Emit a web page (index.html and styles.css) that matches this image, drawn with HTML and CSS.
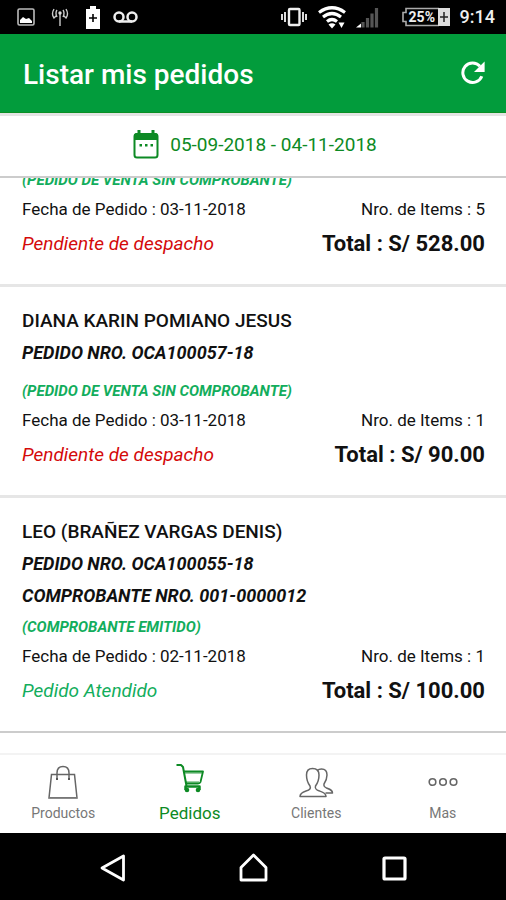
FILE: index.html
```html
<!DOCTYPE html>
<html lang="es">
<head>
<meta charset="utf-8">
<meta name="viewport" content="width=device-width, initial-scale=1">
<title>Listar mis pedidos</title>
<link rel="stylesheet" href="styles.css">
</head>
<body>
<div class="status">
  <div class="status-left">
    <svg width="18" height="18" viewBox="0 0 18 18" aria-hidden="true"><rect x="1" y="1" width="16" height="16" rx="1.5" fill="none" stroke="#bbb" stroke-width="1.6"/><path d="M3 15v-3l3-3 3 2 3-1 3 3v2z" fill="#fff"/></svg>
    <svg width="18" height="18" viewBox="0 0 18 18" aria-hidden="true"><g fill="none" stroke="#ccc" stroke-width="1.4"><path d="M9 5v13"/><path d="M6 2q-2 3 0 7M3 1q-3 5 0 9l2-2M12 2q2 3 0 7M15 1q3 5 0 9l-2-2"/></g><circle cx="9" cy="5" r="1.7" fill="#ddd"/></svg>
    <svg width="16" height="23" viewBox="0 0 16 23" aria-hidden="true"><path d="M1 3h4V0h6v3h4v20H1z" fill="#fff"/><path d="M8 8v8M4 12h8" stroke="#000" stroke-width="1.6"/></svg>
    <svg width="25" height="14" viewBox="0 0 25 14" aria-hidden="true"><g fill="none" stroke="#eee" stroke-width="2.5"><circle cx="6" cy="7" r="4.5"/><circle cx="19" cy="7" r="4.5"/><path d="M6 11.5h13"/></g></svg>
  </div>
  <div class="status-right">
    <svg width="26" height="20" viewBox="0 0 26 20" aria-hidden="true"><rect x="8" y="2" width="10.500" height="16" rx="1" fill="none" stroke="#eee" stroke-width="2.400"/><path d="M1 7v6M4 5v10M22 5v10M25 7v6" stroke="#ddd" stroke-width="2"/></svg>
    <svg class="wifi" width="28" height="23" viewBox="0 0 28 23" aria-hidden="true"><g fill="none" stroke="#fff" stroke-width="3.2"><path d="M1 6.500Q14-3 27 6.500"/><path d="M5 11Q14 4 23 11"/><path d="M9 15.500Q14 11.500 19 15.500"/></g><path d="M10.500 18.500q3.500-2.500 7 0L14 22.500z" fill="#fff"/><path d="M20.500 16.500h6L23.500 22z" fill="#fff"/></svg>
    <svg class="signal" width="24" height="21" viewBox="0 0 24 21" aria-hidden="true"><path d="M1 20.500l5-4v4z" fill="#fff"/><path d="M8 15v5.500M12.500 11v9.500M17 6.500v14M21.500 1v19.500" stroke="#555" stroke-width="3.200"/></svg>
    <div class="battery"><svg width="50" height="20" viewBox="0 0 50 20" aria-hidden="true"><path d="M38 1.500H5v4H2v9h3v4h33" fill="none" stroke="#aaa" stroke-width="1.600"/><path d="M37 1h12v18H37z" fill="#ddd"/><path d="M43 5v10M39 10h8" stroke="#222" stroke-width="1.500"/></svg><span class="percent">25%</span></div>
    <span class="clock">9:14</span>
  </div>
</div>

<header class="appbar">
  <h1 class="title">Listar mis pedidos</h1>
  <button class="refresh" type="button" aria-label="Actualizar"><svg width="24" height="24" viewBox="0 0 24 24" aria-hidden="true"><path d="M20.800 15.200A9.800 9.800 0 1 1 19 5.200" fill="none" stroke="#fff" stroke-width="3"/><path d="M23.600.5v10.500H13z" fill="#fff"/></svg></button>
</header>

<button class="range" type="button">
  <svg width="26" height="29" viewBox="0 0 26 29" aria-hidden="true"><rect x="1.500" y="4" width="23" height="23.500" rx="2.500" fill="none" stroke="#0d8a24" stroke-width="2"/><path d="M1 10V6q0-3 3-3h18q3 0 3 3v4z" fill="#0d8a24"/><path d="M4.500 0h3v5h-3zM18.500 0h3v5h-3zM6.500 14h2.500v2.500H6.500zM12 14h2.500v2.500H12zM17.500 14H20v2.500h-2.500z" fill="#0d8a24"/></svg>
  <span>05-09-2018 - 04-11-2018</span>
</button>

<main class="orders">
  <article class="order">
    <p class="kind">(PEDIDO DE VENTA SIN COMPROBANTE)</p>
    <div class="row info"><span>Fecha de Pedido : 03-11-2018</span><span>Nro. de Items : 5</span></div>
    <div class="row sum"><em class="pending">Pendiente de despacho</em><strong class="total">Total : S/ 528.00</strong></div>
  </article>
  <article class="order">
    <h2 class="name">DIANA KARIN POMIANO JESUS</h2>
    <p class="number">PEDIDO NRO. OCA100057-18</p>
    <p class="kind spaced">(PEDIDO DE VENTA SIN COMPROBANTE)</p>
    <div class="row info"><span>Fecha de Pedido : 03-11-2018</span><span>Nro. de Items : 1</span></div>
    <div class="row sum"><em class="pending">Pendiente de despacho</em><strong class="total">Total : S/ 90.00</strong></div>
  </article>
  <article class="order">
    <h2 class="name">LEO (BRAÑEZ VARGAS DENIS)</h2>
    <p class="number">PEDIDO NRO. OCA100055-18</p>
    <p class="number">COMPROBANTE NRO. 001-0000012</p>
    <p class="kind">(COMPROBANTE EMITIDO)</p>
    <div class="row info"><span>Fecha de Pedido : 02-11-2018</span><span>Nro. de Items : 1</span></div>
    <div class="row sum"><em class="done">Pedido Atendido</em><strong class="total">Total : S/ 100.00</strong></div>
  </article>
</main>

<nav class="tabs">
  <a class="tab" href="#productos"><svg width="32" height="36" viewBox="0 0 32 36" aria-hidden="true"><g fill="none" stroke="#666" stroke-width="1.500"><path d="M4.500 11.500h23L30 35H2z"/><path d="M10 16v-6q0-6.500 6-6.500T22 10v6"/></g><path d="M2 34.500h28" stroke="#777"/><path d="M9 15h2v2H9zM21 15h2v2h-2z" fill="#555"/></svg><span>Productos</span></a>
  <a class="tab active" href="#pedidos"><svg width="30" height="36" viewBox="0 0 30 36" aria-hidden="true"><g fill="none" stroke="#0d8a24" stroke-width="2" stroke-linejoin="round"><path d="M1.500 2H6l2 2 3.500 19"/><path d="M8.500 8.500H28L25.500 19Q25 20.500 23 20.500H11" stroke-width="1.800"/><path d="M9 10h18M11 19h13" stroke-width=".8"/><path d="M10.500 27v-3.500h14V27" stroke-width="2.500"/></g><circle cx="12" cy="27" r="2.300" fill="#0d8a24"/><circle cx="23" cy="27" r="2.300" fill="#0d8a24"/></svg><span>Pedidos</span></a>
  <a class="tab" href="#clientes"><svg width="36" height="36" viewBox="0 0 36 36" aria-hidden="true"><g fill="none" stroke="#666" stroke-width="1.500" stroke-linejoin="round"><path d="M2 33.500c0-3.500 3-4.500 6-5.500 4-1.200 5-2.500 4-5C9 19 8.500 15 8.500 12c0-5 2-6.500 6-6.500s6.500 1.500 6.500 6.500c0 3-.5 7-3.500 11-.6 2.500 0 3.800 4 5 3 1 6.500 2 6.500 5.500z"/><path d="M19.500 7.500c1-1.200 2.500-1.500 4-1.500 4 0 5.500 2 5.500 6 0 3-1 6-3 9-.5 2 0 3 3 4.200 3.500 1.300 5.500 2 5.500 4.800h-7"/></g></svg><span>Clientes</span></a>
  <a class="tab" href="#mas"><svg width="32" height="36" viewBox="0 0 32 36" aria-hidden="true"><g fill="none" stroke="#666" stroke-width="1.600"><circle cx="5.500" cy="19" r="3.300"/><circle cx="16" cy="19" r="3.300"/><circle cx="26.500" cy="19" r="3.300"/></g></svg><span>Mas</span></a>
</nav>

<div class="system">
  <button class="key" type="button" aria-label="Atrás"><svg width="28" height="30" viewBox="0 0 28 30" aria-hidden="true"><path d="M25.500 4v24L4 16z" fill="none" stroke="#fff" stroke-width="2.800" stroke-linejoin="round"/></svg></button>
  <button class="key" type="button" aria-label="Inicio"><svg width="30" height="30" viewBox="0 0 30 30" aria-hidden="true"><path d="M3 15.500L15.500 3 28 15.500V28H3z" fill="none" stroke="#fff" stroke-width="2.800" stroke-linejoin="round"/></svg></button>
  <button class="key" type="button" aria-label="Recientes"><svg width="28" height="30" viewBox="0 0 28 30" aria-hidden="true"><rect x="4" y="6" width="21" height="21" rx="1" fill="none" stroke="#fff" stroke-width="3.200"/></svg></button>
</div>
</body>
</html>
```
FILE: styles.css
```css
* {
  box-sizing: border-box;
}

body {
  margin: 0;
  height: 100vh;
  display: flex;
  flex-direction: column;
  background: #fff;
  color: #111;
  font-family: Roboto, "Liberation Sans", sans-serif;
}

svg {
  display: block;
  flex: none;
}

button {
  margin: 0;
  padding: 0;
  border: 0;
  background: none;
  font: inherit;
}

h1, h2, p {
  margin: 0;
}

.status {
  flex: none;
  height: 34px;
  padding: 0 11px 0 17px;
  display: flex;
  align-items: center;
  justify-content: space-between;
  background: #000;
  color: #eee;
}

.status-left {
  display: flex;
  align-items: center;
  gap: 16px;
}

.status-left svg:last-child {
  margin-left: -4px;
}

.status-right {
  display: flex;
  align-items: center;
  gap: 9px;
}

.wifi {
  margin-left: 2px;
}

.signal {
  margin-right: 13px;
}

.battery {
  position: relative;
}

.percent {
  position: absolute;
  left: 8px;
  top: 2px;
  font-size: 14px;
  line-height: 16px;
  font-weight: 700;
}

.clock {
  font-size: 18px;
  line-height: 24px;
  font-weight: 500;
}

.appbar {
  flex: none;
  height: 79px;
  padding: 4px 21px 0 23px;
  display: flex;
  align-items: center;
  justify-content: space-between;
  background: #029c3c;
  border-bottom: 1px solid #0a9024;
  color: #fff;
}

.title {
  font-size: 28px;
  line-height: 32px;
  font-weight: 500;
}

.refresh {
  margin-bottom: 4px;
}

.range {
  flex: none;
  height: 65px;
  padding: 0 0 4px 4px;
  display: flex;
  align-items: center;
  justify-content: center;
  gap: 11px;
  border-top: 3px solid #e4e4e4;
  border-bottom: 2px solid #ccc;
  color: #0d8a24;
  font-size: 19px;
}

.orders {
  flex: 1;
  min-height: 0;
  overflow: hidden;
  display: flex;
  flex-direction: column;
  justify-content: flex-end;
  padding-bottom: 20px;
}

.order {
  flex: none;
  padding: 18px 21px 20px 22px;
  border-bottom: 3px solid #e6e6e6;
}

.order:last-child {
  border-bottom: 2px solid #ccc;
}

.name {
  font-size: 19px;
  line-height: 32px;
  font-weight: 500;
}

.number {
  font-size: 18px;
  line-height: 32px;
  font-weight: 700;
  font-style: italic;
}

.kind {
  color: #12ad5c;
  font-size: 15px;
  line-height: 30px;
  font-weight: 700;
  font-style: italic;
}

.spaced {
  margin-top: 7px;
}

.row {
  display: flex;
  justify-content: space-between;
  align-items: center;
}

.info {
  font-size: 17px;
  line-height: 29px;
}

.sum {
  font-size: 19px;
  line-height: 40px;
}

.pending {
  color: #d40a0a;
}

.done {
  color: #12ad5c;
}

.total {
  font-size: 22px;
  font-weight: 700;
}

.tabs {
  flex: none;
  height: 80px;
  display: grid;
  grid-template-columns: repeat(4, 1fr);
  border-top: 2px solid #f3f3f3;
}

.tab {
  display: flex;
  flex-direction: column;
  align-items: center;
  padding-top: 8px;
  color: #777;
  font-size: 14px;
  line-height: 28px;
  text-decoration: none;
}

.active {
  color: #0d8a24;
  font-size: 17px;
}

.system {
  flex: none;
  height: 67px;
  padding: 0 42px;
  display: grid;
  grid-template-columns: repeat(3, 1fr);
  align-items: center;
  background: #000;
}

.key {
  display: flex;
  justify-content: center;
}
```
